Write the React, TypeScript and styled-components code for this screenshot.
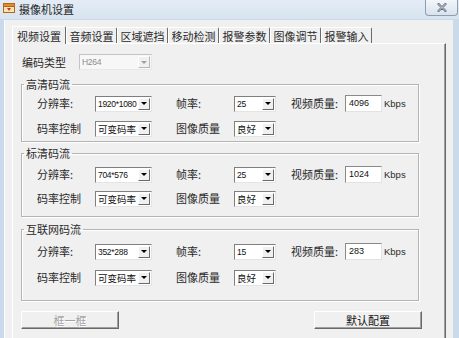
import React from 'react';
import styled, { createGlobalStyle } from 'styled-components';

const GlobalStyle = createGlobalStyle`
  html, body {
    margin: 0;
    padding: 0;
    background: #f0f0f0;
  }
  body {
    font-family: "Noto Sans CJK SC", "Liberation Sans", sans-serif;
  }
  * {
    box-sizing: border-box;
  }
`;

const Window = styled.div`
  width: 459px;
  height: 338px;
  display: flex;
  flex-direction: column;
  overflow: hidden;
  background: #cbdaea;
`;

const TitleBar = styled.div`
  flex: none;
  height: 19px;
  display: flex;
  align-items: flex-start;
  background: linear-gradient(#e4edf6, #d7e3ef);
`;

const TitleIcon = styled.svg`
  margin: 3px 0 0 3px;
  flex: none;
`;

const TitleText = styled.span`
  flex: 1;
  margin: 3px 0 0 4px;
  font-size: 11px;
  line-height: 13px;
  color: #1e1e1e;
`;

const CloseButton = styled.div`
  width: 33px;
  height: 16px;
  margin-right: 1px;
  display: flex;
  align-items: center;
  justify-content: center;
  border: 1px solid #8e9db0;
  border-top: none;
  border-radius: 0 0 4px 4px;
  background: linear-gradient(#f3f6fa, #d9e2ec);
`;

const Client = styled.div`
  flex: 1;
  display: flex;
  flex-direction: column;
  margin: 1px 6px 0 4px;
  padding: 6px 7px 0 7px;
  border-left: 1px solid #fbfcfd;
  background: #f0f0f0;
`;

const TabStrip = styled.div`
  flex: none;
  height: 17px;
  display: flex;
  align-items: flex-end;
`;

const Tab = styled.div<{ $active?: boolean }>`
  width: ${p => (p.$active ? 54 : 51)}px;
  height: ${p => (p.$active ? 18 : 16)}px;
  margin-bottom: ${p => (p.$active ? -1 : 0)}px;
  display: flex;
  align-items: center;
  justify-content: center;
  padding-top: 1px;
  border-top: 1px solid #ffffff;
  border-left: 1px solid #ffffff;
  border-right: 1px solid #6a6a6a;
  border-radius: 2px 2px 0 0;
  background: #f0f0f0;
  font-size: 11px;
  line-height: 13px;
  color: #2a2a2a;
  white-space: nowrap;
  position: relative;
  z-index: ${p => (p.$active ? 1 : 0)};
`;

const Panel = styled.div`
  flex: 1;
  width: 434px;
  padding: 10px 0 0 8px;
  border-top: 1px solid #ffffff;
  border-left: 1px solid #ffffff;
  border-right: 1px solid #696969;
  box-shadow: inset -1px 0 0 #a0a0a0;
`;

const EncodeRow = styled.div`
  height: 16px;
  display: flex;
  align-items: center;
  padding-left: 1px;
`;

const Label = styled.span<{ $w?: number }>`
  width: ${p => (p.$w ? `${p.$w}px` : 'auto')};
  flex: none;
  font-size: 11px;
  line-height: 13px;
  color: #2a2a2a;
  white-space: nowrap;
`;

const Group = styled.fieldset<{ $mt: number; $pt: number; $gap: number; $pb: number }>`
  width: 398px;
  min-width: 0;
  margin: ${p => p.$mt}px 0 0 0;
  padding: ${p => p.$pt}px 0 ${p => p.$pb}px 0;
  border: 1px solid #b4b4b4;
  box-shadow: inset 1px 1px 0 #ffffff, 1px 1px 0 #ffffff;
  display: flex;
  flex-direction: column;
  gap: ${p => p.$gap}px;
`;

const Legend = styled.legend`
  margin-left: 2px;
  padding: 0 2px;
  font-size: 11px;
  line-height: 13px;
  color: #2a2a2a;
`;

const Row = styled.div`
  height: 17px;
  padding-left: 15px;
  display: grid;
  grid-template-columns: 58px 81px 58px 57px 54px 37px auto;
  align-items: center;
`;

const Combo = styled.div<{ $w: number; $disabled?: boolean }>`
  width: ${p => p.$w}px;
  height: 16px;
  display: flex;
  align-items: stretch;
  border: 1px solid;
  border-color: ${p => (p.$disabled ? '#c4c4c4 #e8e8e8 #e8e8e8 #c4c4c4' : '#7f7f7f #e4e4e4 #e4e4e4 #7f7f7f')};
  background: ${p => (p.$disabled ? '#f7f7f7' : '#ffffff')};
  color: ${p => (p.$disabled ? '#8c8c8c' : '#111111')};
`;

const Value = styled.span<{ $cjk?: boolean }>`
  flex: 1;
  min-width: 0;
  overflow: hidden;
  padding-left: 2px;
  font-family: ${p => (p.$cjk ? '"Noto Sans CJK SC", sans-serif' : '"Liberation Sans", sans-serif')};
  font-size: ${p => (p.$cjk ? 9.5 : 8.5)}px;
  letter-spacing: ${p => (p.$cjk ? 0 : -0.3)}px;
  line-height: 14px;
  white-space: nowrap;
`;

const ArrowButton = styled.span<{ $disabled?: boolean }>`
  flex: none;
  width: 12px;
  margin: 1px 1px 1px 0;
  display: flex;
  align-items: center;
  justify-content: center;
  background: #f0f0f0;
  border-top: 1px solid #ffffff;
  border-left: 1px solid #ffffff;
  border-right: 1px solid ${p => (p.$disabled ? '#b8b8b8' : '#6a6a6a')};
  border-bottom: 1px solid ${p => (p.$disabled ? '#b8b8b8' : '#6a6a6a')};

  &::after {
    content: '';
    border-left: 3px solid transparent;
    border-right: 3px solid transparent;
    border-top: 3px solid ${p => (p.$disabled ? '#a0a0a0' : '#000000')};
  }
`;

const TextBox = styled.div`
  width: 37px;
  height: 17px;
  padding-left: 3px;
  border: 1px solid;
  border-color: #8a8a8a #e2e2e2 #e2e2e2 #8a8a8a;
  background: #ffffff;
  font-family: "Liberation Sans", sans-serif;
  font-size: 9px;
  line-height: 15px;
  color: #111111;
`;

const Unit = styled.span`
  margin-left: 2px;
  font-family: "Liberation Sans", sans-serif;
  font-size: 9.5px;
  color: #2a2a2a;
`;

const ButtonRow = styled.div`
  width: 401px;
  margin-top: 10px;
  display: flex;
  justify-content: space-between;
`;

const Button = styled.div<{ $w: number; $disabled?: boolean }>`
  width: ${p => p.$w}px;
  height: 18px;
  display: flex;
  align-items: center;
  justify-content: center;
  border: 1px solid;
  border-color: #ffffff #696969 #696969 #ffffff;
  box-shadow: inset -1px -1px 0 #a0a0a0;
  background: #f0f0f0;
  font-size: 11px;
  line-height: 13px;
  color: ${p => (p.$disabled ? '#a3a3a3' : '#111111')};
  text-shadow: ${p => (p.$disabled ? '1px 1px 0 #ffffff' : 'none')};
`;

type ComboProps = { w: number; value: string; cjk?: boolean; disabled?: boolean };

const ComboBox = ({ w, value, cjk, disabled }: ComboProps) => (
  <Combo $w={w} $disabled={disabled}>
    <Value $cjk={cjk}>{value}</Value>
    <ArrowButton $disabled={disabled} />
  </Combo>
);

type StreamProps = {
  title: string;
  res: string;
  fps: string;
  rate: string;
  mt: number;
  pt: number;
  gap: number;
  pb: number;
};

const StreamGroup = ({ title, res, fps, rate, mt, pt, gap, pb }: StreamProps) => (
  <Group $mt={mt} $pt={pt} $gap={gap} $pb={pb}>
    <Legend>{title}</Legend>
    <Row>
      <Label>分辨率:</Label>
      <ComboBox w={57} value={res} />
      <Label>帧率:</Label>
      <ComboBox w={42} value={fps} />
      <Label>视频质量:</Label>
      <TextBox>{rate}</TextBox>
      <Unit>Kbps</Unit>
    </Row>
    <Row>
      <Label>码率控制</Label>
      <ComboBox w={57} value="可变码率" cjk />
      <Label>图像质量</Label>
      <ComboBox w={42} value="良好" cjk />
    </Row>
  </Group>
);

const tabs = ['视频设置', '音频设置', '区域遮挡', '移动检测', '报警参数', '图像调节', '报警输入'];

const App = () => {
  return (
    <Window>
      <GlobalStyle />
      <TitleBar>
        <TitleIcon width="12" height="10" viewBox="0 0 12 10">
          <rect x="0.5" y="0.5" width="11" height="9" fill="#fbe3b0" stroke="#b5651d" />
          <rect x="0.5" y="0.5" width="11" height="3" fill="#e8892c" stroke="#b5651d" />
          <path d="M4 5 L8 5 L6 8 Z" fill="#c0392b" />
        </TitleIcon>
        <TitleText>摄像机设置</TitleText>
        <CloseButton>
          <svg width="10" height="9" viewBox="0 0 10 9">
            <path d="M1.5 1 L8.5 8 M8.5 1 L1.5 8" stroke="#5b6b7d" strokeWidth="2.2" strokeLinecap="round" />
            <path d="M1.5 1 L8.5 8 M8.5 1 L1.5 8" stroke="#e9eef4" strokeWidth="0.8" strokeLinecap="round" />
          </svg>
        </CloseButton>
      </TitleBar>
      <Client>
        <TabStrip>
          {tabs.map((t, i) => (
            <Tab key={t} $active={i === 0}>{t}</Tab>
          ))}
        </TabStrip>
        <Panel>
          <EncodeRow>
            <Label $w={57}>编码类型</Label>
            <ComboBox w={73} value="H264" disabled />
          </EncodeRow>
          <StreamGroup title="高清码流" res="1920*1080" fps="25" rate="4096" mt={8} pt={4} gap={8} pb={4} />
          <StreamGroup title="标清码流" res="704*576" fps="25" rate="1024" mt={5} pt={6} gap={7} pb={9} />
          <StreamGroup title="互联网码流" res="352*288" fps="15" rate="283" mt={6} pt={7} gap={9} pb={14} />
          <ButtonRow>
            <Button $w={98} $disabled>框一框</Button>
            <Button $w={108}>默认配置</Button>
          </ButtonRow>
        </Panel>
      </Client>
    </Window>
  );
};

export default App;
